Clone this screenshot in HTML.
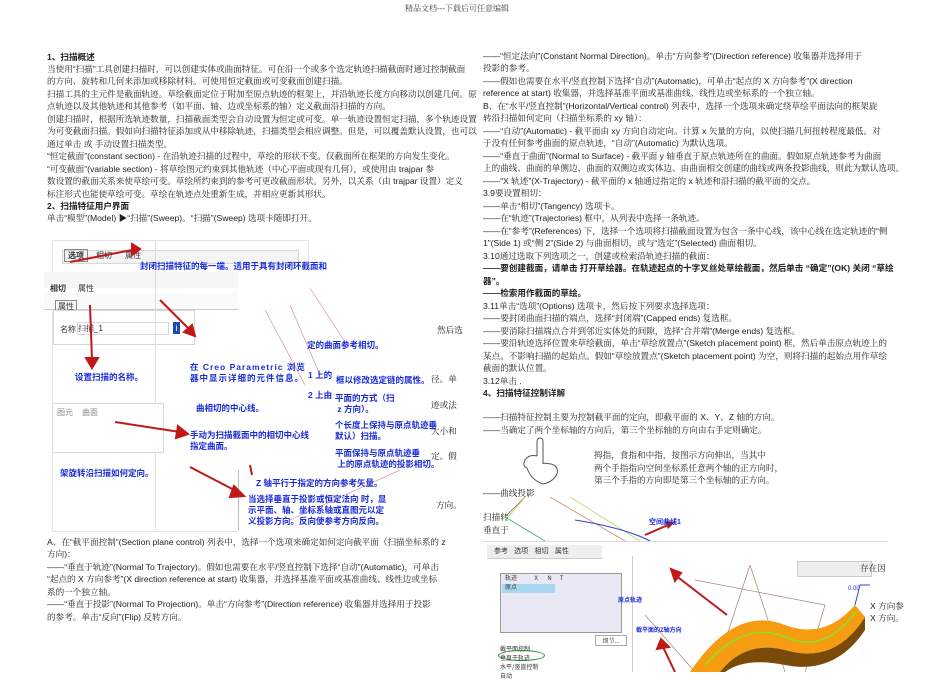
<!DOCTYPE html>
<html><head><meta charset="utf-8"><style>
body{margin:0;width:950px;height:672px;background:#fff;position:relative;overflow:hidden;font-family:"Liberation Sans","Noto Serif CJK SC","Noto Sans CJK SC",sans-serif;font-size:8.6px;color:#222}
.l{position:absolute;white-space:nowrap;line-height:12px}
.b{font-weight:bold;font-family:"Liberation Sans","Noto Sans CJK SC",sans-serif}
.bl{position:absolute;white-space:nowrap;color:#1a2bd6;font-weight:bold;font-size:8.5px;font-family:"Liberation Sans","Noto Sans CJK SC",sans-serif;line-height:11px}
.box{position:absolute;background:#fff;border:1px solid #d8d8d8}
.tab{position:absolute;font-size:8px;color:#333;font-family:"Noto Sans CJK SC",sans-serif}
</style></head><body>
<div class="l" style="left:405px;top:3px;font-size:8px;color:#444">精品文档---下载后可任意编辑</div>

<div class="l b" style="left:47px;top:51px">1、扫描概述</div>
<div class="l" style="left:47px;top:63px">当使用“扫描”工具创建扫描时，可以创建实体或曲面特征。可在沿一个或多个选定轨迹扫描截面时通过控制截面</div>
<div class="l" style="left:47px;top:75px">的方向、旋转和几何来添加或移除材料。可使用恒定截面或可变截面创建扫描。</div>
<div class="l" style="left:47px;top:88px">扫描工具的主元件是截面轨迹。草绘截面定位于附加至原点轨迹的框架上，并沿轨迹长度方向移动以创建几何。原</div>
<div class="l" style="left:47px;top:100px">点轨迹以及其他轨迹和其他参考（如平面、轴、边或坐标系的轴）定义截面沿扫描的方向。</div>
<div class="l" style="left:47px;top:113px">创建扫描时，根据所选轨迹数量，扫描截面类型会自动设置为恒定或可变。单一轨迹设置恒定扫描，多个轨迹设置</div>
<div class="l" style="left:47px;top:125px">为可变截面扫描。假如向扫描特征添加或从中移除轨迹，扫描类型会相应调整。但是，可以覆盖默认设置，也可以</div>
<div class="l" style="left:47px;top:138px">通过单击 或 手动设置扫描类型。</div>
<div class="l" style="left:47px;top:150px">“恒定截面”(constant section) - 在沿轨迹扫描的过程中，草绘的形状不变。仅截面所在框架的方向发生变化。</div>
<div class="l" style="left:47px;top:163px">“可变截面”(variable section) - 将草绘图元约束到其他轨迹（中心平面或现有几何），或使用由 trajpar 参</div>
<div class="l" style="left:47px;top:175px">数设置的截面关系来使草绘可变。草绘所约束到的参考可更改截面形状。另外，以关系（由 trajpar 设置）定义</div>
<div class="l" style="left:47px;top:188px">标注形式也能使草绘可变。草绘在轨迹点处重新生成，并相应更新其形状。</div>
<div class="l b" style="left:47px;top:200px">2、扫描特征用户界面</div>
<div class="l" style="left:47px;top:212px">单击“模型”(Model) ▶“扫描”(Sweep)。“扫描”(Sweep) 选项卡随即打开。</div>

<div style="position:absolute;left:45px;top:233px;width:350px;height:300px;background:#fff"></div>
<div class="box" style="left:52px;top:240px;width:255px;height:290px;border-color:#e4e4e4"></div>
<div class="box" style="left:62px;top:250px;width:235px;height:12px;background:#f4f4f4"></div>
<div class="tab" style="left:64px;top:249px;border:1px solid #888;padding:0 3px;font-weight:bold">选项</div>
<div class="tab" style="left:96px;top:250px">相切</div><div class="tab" style="left:125px;top:250px">属性</div>
<div class="box" style="left:44px;top:272px;width:250px;height:16px;background:#f6f6f6;border:none"></div>
<div class="tab" style="left:50px;top:283px;font-weight:bold">相切</div><div class="tab" style="left:78px;top:283px">属性</div>
<div class="box" style="left:44px;top:293px;width:225px;height:16px;background:#fafafa;border:none;border-bottom:1px solid #ccc"></div>
<div class="tab" style="left:55px;top:300px;border:1px solid #888;padding:0 2px">属性</div>
<div class="box" style="left:53px;top:310px;width:140px;height:33px"></div>
<div class="tab" style="left:60px;top:324px">名称</div>
<div class="box" style="left:77px;top:322px;width:90px;height:11px;font-size:8px">扫描_1</div>
<div style="position:absolute;left:173px;top:322px;width:7px;height:12px;background:#1c4bb0;color:#fff;font-size:9px;text-align:center;line-height:12px">i</div>
<div style="position:absolute;left:155px;top:240px;width:1px;height:290px;background:#ddd"></div>
<div class="box" style="left:52px;top:403px;width:110px;height:48px"></div>
<div class="tab" style="left:57px;top:407px;color:#888">图元&nbsp;&nbsp;&nbsp;&nbsp;&nbsp;曲面</div>
<div style="position:absolute;left:238px;top:268px;width:157px;height:265px;background:#fff"></div>
<div style="position:absolute;left:238px;top:470px;width:1px;height:60px;background:#bbb"></div>
<svg style="position:absolute;left:40px;top:230px" width="360" height="310">
<g stroke="#c01818" stroke-width="2" fill="#c01818">
<line x1="30" y1="32" x2="92" y2="20"/><polygon points="92,14 100,19 92,25"/>
<line x1="50" y1="75" x2="52" y2="130"/><polygon points="46,128 52,138 58,128"/>
<line x1="120" y1="70" x2="150" y2="100"/><polygon points="144,102 155,106 152,95"/>
<line x1="75" y1="192" x2="140" y2="202"/><polygon points="138,196 148,204 136,208"/>
<line x1="150" y1="237" x2="198" y2="262"/><polygon points="194,256 204,266 190,267"/>
<line x1="210" y1="235" x2="212" y2="245"/>
</g>
<g stroke="#d08090" stroke-width="0.6">
<line x1="225" y1="80" x2="265" y2="155"/><line x1="250" y1="75" x2="280" y2="145"/><line x1="270" y1="58" x2="305" y2="112"/><line x1="250" y1="290" x2="360" y2="240"/>
</g></svg>
<div class="bl" style="left:140px;top:261px">封闭扫描特征的每一端。适用于具有封闭环截面和</div>
<div class="bl" style="left:75px;top:372px">设置扫描的名称。</div>
<div class="bl" style="left:190px;top:362px;letter-spacing:1px">在 Creo Parametric 浏览<br>器中显示详细的元件信息。</div>
<div class="bl" style="left:307px;top:340px">定的曲面参考相切。</div>
<div class="bl" style="left:308px;top:370px">1 上的</div>
<div class="bl" style="left:336px;top:375px">框以修改选定链的属性。</div>
<div class="bl" style="left:308px;top:390px">2 上由</div>
<div class="bl" style="left:335px;top:393px">平面的方式（扫<br>&nbsp;z 方向）。</div>
<div class="bl" style="left:196px;top:403px">曲相切的中心线。</div>
<div class="bl" style="left:335px;top:420px">个长度上保持与原点轨迹垂<br>默认）扫描。</div>
<div class="bl" style="left:190px;top:430px">手动为扫描截面中的相切中心线<br>指定曲面。</div>
<div class="bl" style="left:335px;top:448px">平面保持与原点轨迹垂<br>&nbsp;上的原点轨迹的投影相切。</div>
<div class="bl" style="left:60px;top:468px">架旋转沿扫描如何定向。</div>
<div class="bl" style="left:256px;top:478px">Z 轴平行于指定的方向参考矢量。</div>
<div class="bl" style="left:248px;top:494px">当选择垂直于投影或恒定法向 时，显<br>示平面、轴、坐标系轴或直图元以定<br>义投影方向。反向使参考方向反向。</div>
<div class="l" style="left:437px;top:324px">然后选</div>
<div class="l" style="left:431px;top:373px">径。单</div>
<div class="l" style="left:431px;top:399px">迹或法</div>
<div class="l" style="left:431px;top:425px">大小和</div>
<div class="l" style="left:431px;top:450px">定。假</div>
<div class="l" style="left:436px;top:499px">方向。</div>

<div class="l" style="left:47px;top:536px">A、在“截平面控制”(Section plane control) 列表中，选择一个选项来确定如何定向截平面（扫描坐标系的 z</div>
<div class="l" style="left:47px;top:548px">方向)：</div>
<div class="l" style="left:47px;top:561px">——“垂直于轨迹”(Normal To Trajectory)。假如也需要在水平/竖直控制下选择“自动”(Automatic)，可单击</div>
<div class="l" style="left:47px;top:573px">“起点的 X 方向参考”(X direction reference at start) 收集器，并选择基准平面或基准曲线、线性边或坐标</div>
<div class="l" style="left:47px;top:586px">系的一个独立轴。</div>
<div class="l" style="left:47px;top:598px">——“垂直于投影”(Normal To Projection)。单击“方向参考”(Direction reference) 收集器并选择用于投影</div>
<div class="l" style="left:47px;top:611px">的参考。单击“反向”(Flip) 反转方向。</div>

<div class="l" style="left:483px;top:50px">——“恒定法向”(Constant Normal Direction)。单击“方向参考”(Direction reference) 收集器并选择用于</div>
<div class="l" style="left:483px;top:62px">投影的参考。</div>
<div class="l" style="left:483px;top:75px">——假如也需要在水平/竖直控制下选择“自动”(Automatic)，可单击“起点的 X 方向参考”(X direction</div>
<div class="l" style="left:483px;top:87px">reference at start) 收集器，并选择基准平面或基准曲线、线性边或坐标系的一个独立轴。</div>
<div class="l" style="left:483px;top:100px">B、在“水平/竖直控制”(Horizontal/Vertical control) 列表中，选择一个选项来确定绕草绘平面法向的框架旋</div>
<div class="l" style="left:483px;top:112px">转沿扫描如何定向（扫描坐标系的 xy 轴）：</div>
<div class="l" style="left:483px;top:125px">——“自动”(Automatic) - 截平面由 xy 方向自动定向。计算 x 矢量的方向，以使扫描几何扭转程度最低。对</div>
<div class="l" style="left:483px;top:137px">于没有任何参考曲面的原点轨迹，“自动”(Automatic) 为默认选项。</div>
<div class="l" style="left:483px;top:150px">——“垂直于曲面”(Normal to Surface) - 截平面 y 轴垂直于原点轨迹所在的曲面。假如原点轨迹参考为曲面</div>
<div class="l" style="left:483px;top:162px">上的曲线、曲面的单侧边、曲面的双侧边或实体边、由曲面相交创建的曲线或两条投影曲线，则此为默认选项。</div>
<div class="l" style="left:483px;top:175px">——“X 轨迹”(X-Trajectory) - 截平面的 x 轴通过指定的 x 轨迹和沿扫描的截平面的交点。</div>
<div class="l" style="left:483px;top:187px">3.9要设置相切：</div>
<div class="l" style="left:483px;top:200px">——单击“相切”(Tangency) 选项卡。</div>
<div class="l" style="left:483px;top:212px">——在“轨迹”(Trajectories) 框中，从列表中选择一条轨迹。</div>
<div class="l" style="left:483px;top:225px">——在“参考”(References) 下，选择一个选项将扫描截面设置为包含一条中心线，该中心线在选定轨迹的“侧</div>
<div class="l" style="left:483px;top:237px">1”(Side 1) 或“侧 2”(Side 2) 与曲面相切，或与“选定”(Selected) 曲面相切。</div>
<div class="l" style="left:483px;top:250px">3.10通过选取下列选项之一，创建或检索沿轨迹扫描的截面：</div>
<div class="l b" style="left:483px;top:262px">——要创建截面，请单击 打开草绘器。在轨迹起点的十字叉丝处草绘截面，然后单击 “确定”(OK) 关闭 “草绘</div>
<div class="l b" style="left:483px;top:275px">器”。</div>
<div class="l b" style="left:483px;top:287px">——检索用作截面的草绘。</div>
<div class="l" style="left:483px;top:300px">3.11单击“选项”(Options) 选项卡，然后按下列要求选择选项：</div>
<div class="l" style="left:483px;top:312px">——要封闭曲面扫描的端点，选择“封闭端”(Capped ends) 复选框。</div>
<div class="l" style="left:483px;top:325px">——要消除扫描端点合并到邻近实体处的间隙，选择“合并端”(Merge ends) 复选框。</div>
<div class="l" style="left:483px;top:337px">——要沿轨迹选择位置来草绘截面，单击“草绘放置点”(Sketch placement point) 框，然后单击原点轨迹上的</div>
<div class="l" style="left:483px;top:350px">某点。不影响扫描的起始点。假如“草绘放置点”(Sketch placement point) 为空，则将扫描的起始点用作草绘</div>
<div class="l" style="left:483px;top:362px">截面的默认位置。</div>
<div class="l" style="left:483px;top:375px">3.12单击 .</div>
<div class="l b" style="left:483px;top:387px">4、扫描特征控制详解</div>
<div class="l" style="left:483px;top:411px">——扫描特征控制主要为控制截平面的定向，即截平面的 X、Y、Z 轴的方向。</div>
<div class="l" style="left:483px;top:424px">——当确定了两个坐标轴的方向后，第三个坐标轴的方向由右手定则确定。</div>
<svg style="position:absolute;left:518px;top:436px" width="50" height="52">
<path d="M22 2 q3 0 3 4 v22 M22 2 q-3 0 -3 4 v14 M19 20 q-8 -2 -12 4 q-3 6 2 8 M9 32 q4 12 16 16 q10 -2 14 -10 q2 -8 -6 -10 l-8 -1" stroke="#555" fill="none" stroke-width="1"/></svg>
<div class="l" style="left:594px;top:449px">拇指，食指和中指，按图示方向伸出，当其中</div>
<div class="l" style="left:594px;top:462px">两个手指指向空间坐标系任意两个轴的正方向时，</div>
<div class="l" style="left:594px;top:474px">第三个手指的方向即是第三个坐标轴的正方向。</div>
<div class="l" style="left:483px;top:487px">——曲线投影</div>
<div class="l" style="left:483px;top:511px">扫描转</div>
<div class="l" style="left:483px;top:524px">垂直于</div>
<svg style="position:absolute;left:505px;top:497px" width="220" height="44">
<line x1="0" y1="20" x2="20" y2="0" stroke="#a06040" stroke-width="0.8"/>
<line x1="20" y1="0" x2="-5" y2="30" stroke="#b0d060" stroke-width="0.8"/>
<line x1="0" y1="20" x2="40" y2="44" stroke="#50b080" stroke-width="1"/>
<line x1="45" y1="0" x2="120" y2="44" stroke="#c09070" stroke-width="0.8"/>
<line x1="65" y1="0" x2="135" y2="44" stroke="#b8d860" stroke-width="0.8"/>
<path d="M70 23 q50 8 75 21" stroke="#3040d0" fill="none"/>
<line x1="140" y1="38" x2="163" y2="28" stroke="#c01818" stroke-width="2"/>
<polygon points="160,24 170,25 163,32" fill="#c01818"/>
</svg>
<div class="bl" style="left:649px;top:517px;font-size:7px">空间曲线1</div>
<div style="position:absolute;left:483px;top:541px;width:405px;height:131px;background:#fff;border-top:1px solid #ddd"></div>
<div style="position:absolute;left:487px;top:545px;width:115px;height:13px;background:#eee;border-bottom:1px solid #ccc"></div>
<div class="tab" style="left:494px;top:546px;font-size:7px">参考&nbsp;&nbsp;&nbsp;&nbsp;选项&nbsp;&nbsp;&nbsp;&nbsp;相切&nbsp;&nbsp;&nbsp;&nbsp;属性</div>
<div style="position:absolute;left:632px;top:556px;width:1px;height:116px;background:#ccc"></div>
<div style="position:absolute;left:500px;top:573px;width:120px;height:58px;background:#ebe8f5;border:1px solid #999"></div>
<div style="position:absolute;left:502px;top:584px;width:53px;height:9px;background:#a8d8f0"></div>
<div class="tab" style="left:505px;top:573px;font-size:6px">轨迹&nbsp;&nbsp;&nbsp;&nbsp;&nbsp;&nbsp;&nbsp;&nbsp;&nbsp;&nbsp;&nbsp;&nbsp;&nbsp;X&nbsp;&nbsp;&nbsp;&nbsp;&nbsp;&nbsp;&nbsp;N&nbsp;&nbsp;&nbsp;&nbsp;&nbsp;&nbsp;T<br>原点</div>
<div style="position:absolute;left:595px;top:635px;width:30px;height:9px;border:1px solid #aaa;font-size:6px;text-align:center">细节...</div>
<div class="tab" style="left:500px;top:644px;font-size:6px;line-height:9px">截平面控制<br>垂直于轨迹<br>水平/竖直控制<br>自动</div>
<div style="position:absolute;left:498px;top:650px;width:45px;height:9px;border:1.5px solid #2a8a3a;border-radius:50%"></div>
<div style="position:absolute;left:797px;top:561px;width:73px;height:14px;background:#eee;border:1px solid #ccc"></div>
<div class="l" style="left:860px;top:562px">存在因</div>
<div class="l" style="left:870px;top:600px">X 方向参</div>
<div class="l" style="left:870px;top:612px">X 方向。</div>
<svg style="position:absolute;left:635px;top:565px" width="235" height="107">
<g stroke="#a88070" stroke-width="0.7" fill="none"><path d="M60 15 L190 40 L170 107"/><path d="M115 0 L80 107 M115 0 L150 107"/><path d="M10 50 L60 107"/></g>
<path d="M55 107 Q100 40 150 60 Q190 75 220 40 L230 52 Q200 100 150 85 Q110 75 85 107 Z" fill="#f59c10"/>
<path d="M220 40 L230 52 L230 65 Q200 110 150 100 Q110 92 90 107 L85 107 Q110 75 150 85 Q200 100 230 52" fill="#7a4a08"/>
<path d="M70 100 Q110 55 150 72 Q190 90 222 45" stroke="#8fe020" fill="none" stroke-width="1.5"/>
<g stroke="#c01818" stroke-width="2" fill="#c01818"><line x1="92" y1="50" x2="40" y2="10"/><polygon points="36,4 46,8 40,16"/><line x1="40" y1="107" x2="28" y2="82"/><polygon points="22,84 26,74 34,82"/></g>
<path d="M220 40 L225 20 L235 20" stroke="#3040d0" fill="none"/>
</svg>
<div class="bl" style="left:618px;top:596px;font-size:6px">原点轨迹</div>
<div class="bl" style="left:636px;top:626px;font-size:6px">截平面的Z轴方向</div>
<div class="bl" style="left:848px;top:584px;font-size:6px;font-weight:normal">0.00</div>
</body></html>
